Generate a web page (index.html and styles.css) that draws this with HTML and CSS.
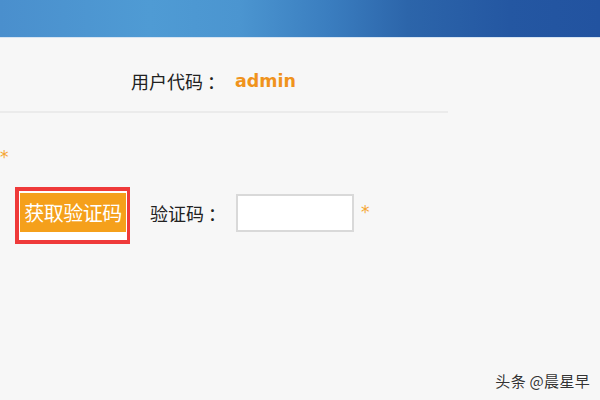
FILE: index.html
```html
<!DOCTYPE html>
<html lang="zh-CN">
<head>
<meta charset="utf-8">
<link rel="stylesheet" href="styles.css">
</head>
<body>
<div class="header"></div>
<div class="user-row">
  <span class="label">用户代码<span class="colon">：</span></span><span class="user">admin</span>
</div>
<div class="star-row"><span class="star">*</span></div>
<div class="form-row">
  <div class="btn-frame"><button class="btn">获取验证码</button></div>
  <span class="label code-label">验证码<span class="colon">：</span></span>
  <input class="code-input" type="text">
  <span class="star">*</span>
</div>
<div class="watermark">头条 @晨星早</div>
</body>
</html>
```
FILE: styles.css
```css
html, body {
  margin: 0;
  padding: 0;
}
body {
  width: 600px;
  height: 400px;
  overflow: hidden;
  background: #f7f7f7;
  font-family: "Noto Sans CJK SC", "Noto Sans", sans-serif;
  position: relative;
}
.header {
  height: 37px;
  background: linear-gradient(90deg, #4a8fcd 0%, #4f9bd4 25%, #4b95d0 40%, #3a7dbf 55%, #2c65aa 68%, #2457a2 85%, #2253a0 100%);
  border-bottom: 1px solid #d6e4f2;
}
.user-row {
  width: 448px;
  height: 75px;
  box-sizing: border-box;
  padding: 31px 0 0 131px;
  border-bottom: 2px solid #ebebeb;
  display: flex;
  align-items: flex-start;
  line-height: 24px;
}
.label {
  font-size: 18px;
  color: #222;
  line-height: 24px;
}
.colon {
  margin-left: 4px;
}
.user {
  font-family: "DejaVu Sans", sans-serif;
  font-weight: bold;
  font-size: 17.5px;
  color: #f0931c;
  margin-left: 10px;
  line-height: 24px;
}
.star {
  color: #f5a531;
  font-family: "DejaVu Sans", sans-serif;
  font-size: 17px;
}
.star-row {
  height: 36px;
  padding: 36px 0 0 0;
  box-sizing: border-box;
  line-height: 14px;
}
.form-row {
  display: flex;
  align-items: center;
  margin-top: 38px;
  padding-left: 15px;
}
.btn-frame {
  border: 4px solid #ef3a3a;
  border-right-width: 3px;
  padding: 2px 1px 8px 1px;
  background: #ffffff;
  display: flex;
  align-self: flex-start;
}
.btn {
  width: 106px;
  height: 39px;
  border: 0;
  padding: 0;
  background: #f5a01b;
  color: #ffffff;
  font-family: "Noto Sans CJK SC", sans-serif;
  font-size: 20px;
  letter-spacing: -0.5px;
  line-height: 38px;
}
.code-label {
  margin-left: 20px;
  margin-top: -6px;
}
.code-input {
  width: 118px;
  height: 38px;
  box-sizing: border-box;
  margin-left: 10px;
  margin-top: -5px;
  border: 2px solid #d9d9d9;
  background: #fff;
  outline: none;
}
.form-row .star {
  margin-left: 7px;
  margin-top: -8px;
}
.watermark {
  position: absolute;
  right: 10px;
  bottom: 9px;
  font-size: 15px;
  color: #333;
  text-shadow: 0 0 2px #fff, 0 0 1px #fff;
  letter-spacing: 0.3px;
}
```
